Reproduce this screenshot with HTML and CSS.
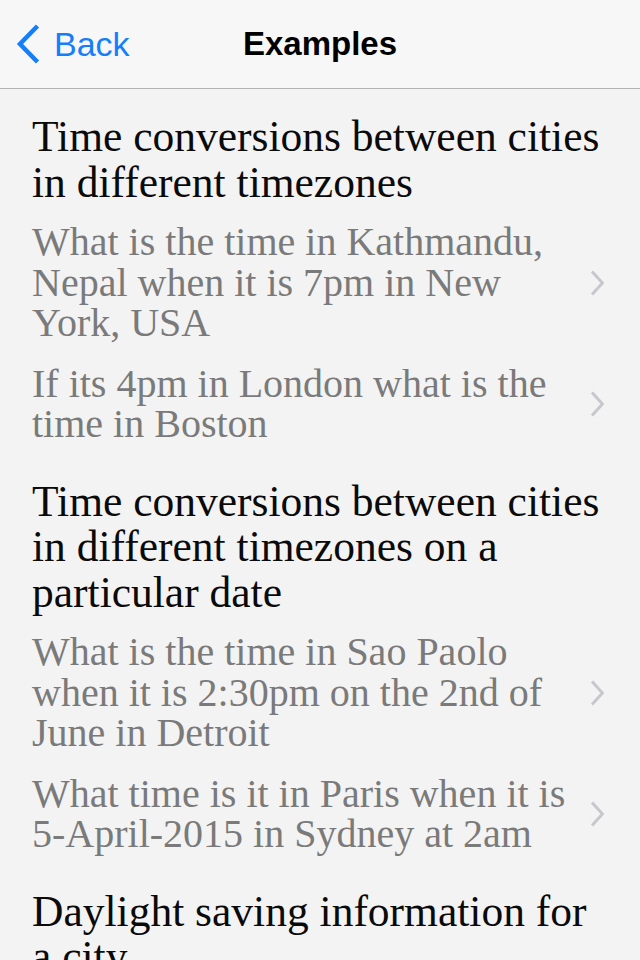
FILE: index.html
```html
<!DOCTYPE html>
<html lang="en">
<head>
<meta charset="utf-8">
<title>Examples</title>
<link rel="stylesheet" href="styles.css">
</head>
<body>
<header class="navbar">
  <a class="back" href="#">
    <svg class="back-icon" width="28" height="42" viewBox="0 0 28 42"><path d="M23.5 3 L6 21 L23.5 39" fill="none" stroke="#157efb" stroke-width="4.5" stroke-linecap="butt" stroke-linejoin="miter"/></svg>
    <span class="back-label">Back</span>
  </a>
  <h1 class="nav-title">Examples</h1>
</header>
<main class="content">
  <section class="group">
    <h2 class="group-title">Time conversions between cities in different timezones</h2>
    <ul class="items">
      <li class="item"><span class="item-text">What is the time in Kathmandu, Nepal when it is 7pm in New York, USA</span><svg class="chev" width="14" height="26" viewBox="0 0 14 26"><path d="M2 1.5 L12.5 13 L2 24.5" fill="none" stroke="#c7c7cc" stroke-width="3"/></svg></li>
      <li class="item"><span class="item-text">If its 4pm in London what is the time in Boston</span><svg class="chev" width="14" height="26" viewBox="0 0 14 26"><path d="M2 1.5 L12.5 13 L2 24.5" fill="none" stroke="#c7c7cc" stroke-width="3"/></svg></li>
    </ul>
  </section>
  <section class="group">
    <h2 class="group-title">Time conversions between cities in different timezones on a particular date</h2>
    <ul class="items">
      <li class="item"><span class="item-text">What is the time in Sao Paolo when it is 2:30pm on the 2nd of June in Detroit</span><svg class="chev" width="14" height="26" viewBox="0 0 14 26"><path d="M2 1.5 L12.5 13 L2 24.5" fill="none" stroke="#c7c7cc" stroke-width="3"/></svg></li>
      <li class="item"><span class="item-text">What time is it in Paris when it is 5-April-2015 in Sydney at 2am</span><svg class="chev" width="14" height="26" viewBox="0 0 14 26"><path d="M2 1.5 L12.5 13 L2 24.5" fill="none" stroke="#c7c7cc" stroke-width="3"/></svg></li>
    </ul>
  </section>
  <section class="group">
    <h2 class="group-title">Daylight saving information for a city</h2>
  </section>
</main>
</body>
</html>
```
FILE: styles.css
```css
html, body {
  margin: 0;
  padding: 0;
  height: 100%;
  overflow: hidden;
}
body {
  background: #f3f3f3;
  font-family: "Liberation Serif", "Times New Roman", serif;
}
.navbar {
  height: 88px;
  background: #f7f7f7;
  border-bottom: 1px solid #b2b2b2;
  display: flex;
  align-items: center;
  position: relative;
}
.back {
  display: flex;
  align-items: center;
  text-decoration: none;
  color: #157efb;
  padding-left: 14px;
  gap: 12px;
  font-family: "Liberation Sans", Arial, sans-serif;
  font-size: 34px;
}
.back-icon {
  display: block;
}
.nav-title {
  position: absolute;
  left: 0;
  right: 0;
  margin: 0;
  text-align: center;
  font-family: "Liberation Sans", Arial, sans-serif;
  font-size: 33px;
  font-weight: bold;
  color: #000;
  pointer-events: none;
}
.content {
  padding: 25px 36px 0 32px;
}
.group {
  margin-bottom: 24px;
}
.group-title {
  margin: 0 0 7px;
  font-size: 43.5px;
  font-weight: normal;
  line-height: 45.5px;
  color: #0a0a0a;
}
.items {
  list-style: none;
  margin: 0;
  padding: 0;
}
.item {
  display: flex;
  align-items: center;
  padding: 10px 0;
}
.item-text {
  flex: 1;
  padding-right: 22px;
  font-size: 40px;
  line-height: 40.5px;
  color: #7a7a7a;
}
.chev {
  display: block;
  flex: none;
}
```
